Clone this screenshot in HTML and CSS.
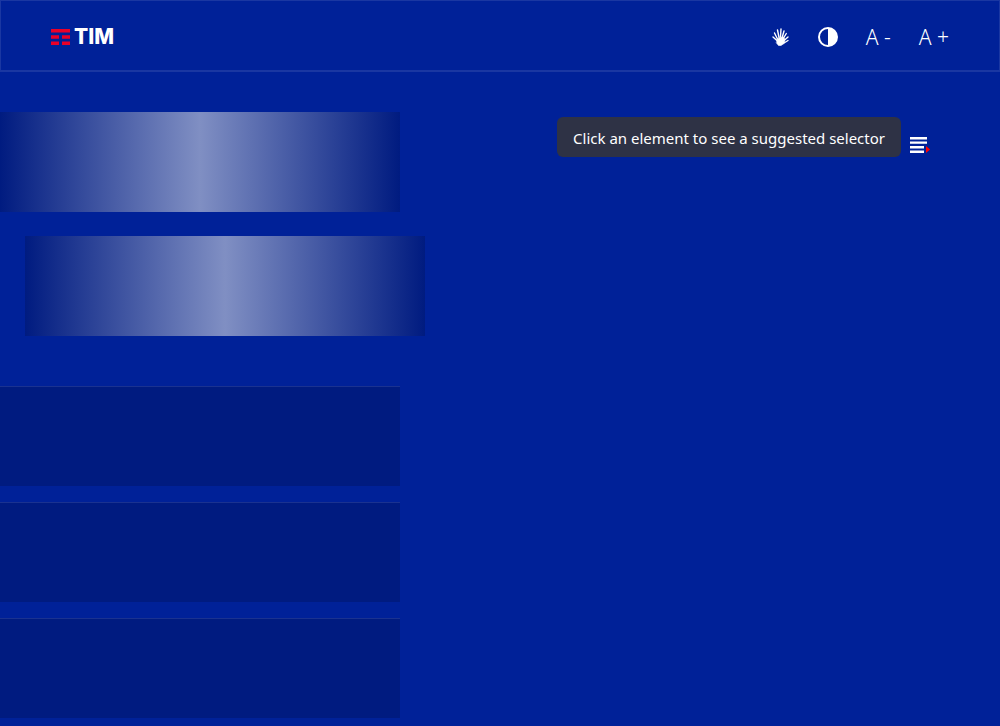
FILE: index.html
```html
<!DOCTYPE html>
<html lang="en">
<head>
<meta charset="utf-8">
<meta name="viewport" content="width=device-width, initial-scale=1">
<title>TIM</title>
<link rel="stylesheet" href="styles.css">
</head>
<body>
<header class="header">
  <a class="brand" href="#">
    <svg class="brand-mark" width="19" height="16" viewBox="0 0 19 16" fill="#eb0028" aria-hidden="true">
      <path d="M0 0h19v3.400H0zM0 6.300h8v3.400H0zM11 6.300h8v3.400h-8zM0 12.500h8V16H0zM11 12.500h8V16h-8z"/>
    </svg>
    <span class="brand-name">TIM</span>
  </a>
  <nav class="tools" aria-label="Accessibility">
    <button class="tool" type="button" aria-label="Sign language">
      <svg width="18" height="18" viewBox="0 0 18 18" fill="none" stroke="#fff" stroke-linecap="round" aria-hidden="true">
        <path d="M5.500 11 8 9.500l3.500-.5 1.500 2.500-1 4-3 2H6.500l-2-2.500z" fill="#fff" stroke-width=".6"/>
        <path d="M5.500 13 1 9M5.500 11 2.500 5M7 9.500 5.500 2M8.500 9 9 1" stroke-width="1.400"/>
        <path d="M10 10 12 3M11 11 14.300 5.500M12 12.500 16 9M12 15l4-2.500" stroke-width="1.400"/>
      </svg>
    </button>
    <button class="tool" type="button" aria-label="Contrast">
      <svg width="20" height="20" viewBox="0 0 20 20" aria-hidden="true">
        <circle cx="10" cy="10" r="9" fill="none" stroke="#fff" stroke-width="2"/>
        <path d="M10 1a9 9 0 0 1 0 18z" fill="#fff"/>
      </svg>
    </button>
    <button class="tool" type="button" aria-label="Decrease text size">A -</button>
    <button class="tool" type="button" aria-label="Increase text size">A +</button>
  </nav>
</header>
<main class="content">
  <div class="column" aria-busy="true">
    <div class="loader"></div>
    <div class="loader loader-nested"></div>
    <div class="cards">
      <div class="card"></div>
      <div class="card"></div>
      <div class="card"></div>
    </div>
  </div>
  <div class="actions">
    <div class="tip" role="status">Click an element to see a suggested selector</div>
    <button class="menu" type="button" aria-label="Open menu">
      <svg width="20" height="17" viewBox="0 0 20 17" aria-hidden="true">
        <path d="M0 0h17v2.400H0zM0 4.400h17v2.400H0zM0 9h14v2.400H0zM0 13.600h14V16H0z" fill="#fff"/>
        <path d="m16 9 4 3.500-4 3.500z" fill="#f00"/>
      </svg>
    </button>
  </div>
</main>
</body>
</html>
```
FILE: styles.css
```css
* {
  box-sizing: border-box;
}

body {
  margin: 0;
  background: #002198;
  color: #fff;
  font-family: "Noto Sans", "Open Sans", sans-serif;
}

button {
  padding: 0;
  border: 0;
  background: none;
  color: inherit;
  font: inherit;
  cursor: pointer;
}

svg {
  display: block;
}

.header {
  display: flex;
  align-items: center;
  justify-content: space-between;
  height: 72px;
  padding: 3px 50px 0;
  border: 1px solid #1a37a2;
  border-bottom-width: 2px;
}

.brand {
  display: flex;
  align-items: center;
  gap: 4px;
  color: inherit;
  text-decoration: none;
}

.brand-name {
  font-family: Inter, sans-serif;
  font-size: 21px;
  font-weight: 800;
  line-height: 32px;
}

.tools {
  display: flex;
  align-items: center;
  gap: 28px;
}

.tool {
  font-size: 21px;
  font-weight: 300;
  line-height: 32px;
}

.content {
  display: flex;
  justify-content: space-between;
  padding-top: 40px;
}

.column {
  width: 400px;
}

.loader {
  height: 100px;
  margin-bottom: 24px;
  background: linear-gradient(90deg, #001b80, #808fc3 50%, #001b80);
}

.loader-nested {
  margin-right: -25px;
  margin-left: 25px;
}

.cards {
  display: grid;
  gap: 16px;
  margin-top: 50px;
}

.card {
  height: 100px;
  border-top: 1px solid #1a3290;
  background: #001b80;
}

.actions {
  display: flex;
  align-items: flex-start;
  gap: 9px;
  padding: 5px 70px 0 0;
}

.tip {
  padding: 9px 16px 7px;
  border-radius: 6px;
  background: #2e3245;
  font-size: 15px;
  line-height: 24px;
}

.menu {
  margin-top: 20px;
}
```
